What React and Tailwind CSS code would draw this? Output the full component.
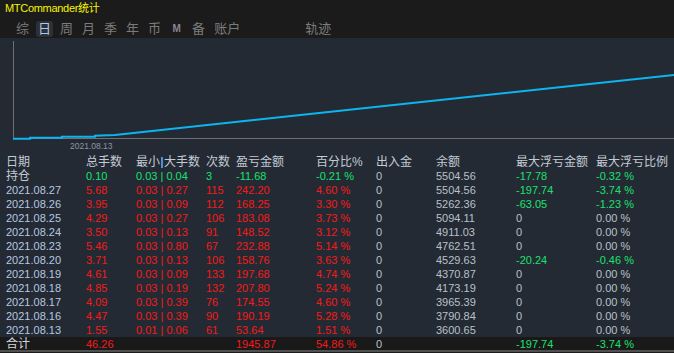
import React from 'react'

const GRID = 'grid grid-cols-[80px_50px_70px_30px_80px_60px_60px_80px_80px_1fr] pl-[6px]'

const RED = 'text-[#f41a1a]'
const GREEN = 'text-[#19e06f]'
const GRAY = 'text-[#b9c0ca]'

// [date, total, min, max, count, pnl, pct, io, balance, maxDd, maxDdPct]
const ROWS = [
  ['2021.08.27', '5.68', '0.03', '0.27', '115', '242.20', '4.60 %', '0', '5504.56', '-197.74', '-3.74 %'],
  ['2021.08.26', '3.95', '0.03', '0.09', '112', '168.25', '3.30 %', '0', '5262.36', '-63.05', '-1.23 %'],
  ['2021.08.25', '4.29', '0.03', '0.27', '106', '183.08', '3.73 %', '0', '5094.11', '0', '0.00 %'],
  ['2021.08.24', '3.50', '0.03', '0.13', '91', '148.52', '3.12 %', '0', '4911.03', '0', '0.00 %'],
  ['2021.08.23', '5.46', '0.03', '0.80', '67', '232.88', '5.14 %', '0', '4762.51', '0', '0.00 %'],
  ['2021.08.20', '3.71', '0.03', '0.13', '106', '158.76', '3.63 %', '0', '4529.63', '-20.24', '-0.46 %'],
  ['2021.08.19', '4.61', '0.03', '0.09', '133', '197.68', '4.74 %', '0', '4370.87', '0', '0.00 %'],
  ['2021.08.18', '4.85', '0.03', '0.19', '132', '207.80', '5.24 %', '0', '4173.19', '0', '0.00 %'],
  ['2021.08.17', '4.09', '0.03', '0.39', '76', '174.55', '4.60 %', '0', '3965.39', '0', '0.00 %'],
  ['2021.08.16', '4.47', '0.03', '0.39', '90', '190.19', '5.28 %', '0', '3790.84', '0', '0.00 %'],
  ['2021.08.13', '1.55', '0.01', '0.06', '61', '53.64', '1.51 %', '0', '3600.65', '0', '0.00 %'],
]

const TABS = ['综', '日', '周', '月', '季', '年', '币', 'M', '备', '账户']

function Tabs() {
  return (
    <div className="flex h-[19px] items-center pl-[14px] text-[13px] text-[#7b7b7b]">
      {TABS.map((t, i) => (
        <span
          key={t}
          className={`mr-[5px] flex h-[16px] items-center justify-center rounded-[3px] px-[2px] leading-none ${
            i === 1 ? 'bg-[#2a313b] text-[#b3c7e2]' : ''
          } ${t === 'M' ? 'w-[17px] text-[10px] font-bold text-[#8a8592]' : ''}`}
        >
          {t}
        </span>
      ))}
      <span className="ml-[56px] px-[2px] leading-none">轨迹</span>
    </div>
  )
}

function Chart() {
  return (
    <div className="h-[117px]">
      <svg width="674" height="117" className="block">
        <line x1="13.5" y1="3" x2="13.5" y2="101" stroke="#707070" strokeWidth="1" />
        <line x1="13" y1="100.5" x2="674" y2="100.5" stroke="#707070" strokeWidth="1" />
        <polyline
          points="13,100.7 30,100.7 30,99.7 62,99.7 62,98.8 95,98.8 95,97.8 115,97 674,37"
          fill="none"
          stroke="#0db5ef"
          strokeWidth="2"
        />
        <text x="70" y="110.5" fontSize="8.5" fill="#8c97a5" fontFamily="Liberation Sans, sans-serif">
          2021.08.13
        </text>
      </svg>
    </div>
  )
}

function Row({ r }) {
  const ddColor = r[9] === '0' ? GRAY : GREEN
  return (
    <div className={`${GRID} h-[14px] leading-[14px] text-[11px]`}>
      <span className="text-[#b5c8e0]">{r[0]}</span>
      <span className={RED}>{r[1]}</span>
      <span className={RED}>{r[2]} | {r[3]}</span>
      <span className={RED}>{r[4]}</span>
      <span className={RED}>{r[5]}</span>
      <span className={RED}>{r[6]}</span>
      <span className={GRAY}>{r[7]}</span>
      <span className={GRAY}>{r[8]}</span>
      <span className={ddColor}>{r[9]}</span>
      <span className={ddColor}>{r[10]}</span>
    </div>
  )
}

export default function App() {
  return (
    <div className="h-[353px] w-[674px] overflow-hidden bg-[#1b1b1b] font-['Liberation_Sans','Noto_Sans_CJK_SC',sans-serif]">
      <div className="h-[19px] pl-[5px] text-[11px] leading-[17px] tracking-[-0.3px] text-[#f5f500]">
        MTCommander统计
      </div>
      <Tabs />

      <div className="bg-[#242a33]">
        <Chart />

        {/* header */}
        <div className={`${GRID} h-[15px] text-[12px] leading-[15px] text-[#c3cbd6]`}>
          <span>日期</span>
          <span>总手数</span>
          <span className="flex items-center">
            最小<span className="mx-[1px] inline-block h-[11px] w-[2px] bg-[#4f8fd6]" />大手数
          </span>
          <span>次数</span>
          <span>盈亏金额</span>
          <span>百分比%</span>
          <span>出入金</span>
          <span>余额</span>
          <span>最大浮亏金额</span>
          <span>最大浮亏比例</span>
        </div>

        {/* open positions */}
        <div className={`${GRID} h-[13px] leading-[13px] text-[11px]`}>
          <span className="text-[12px] text-[#c3cbd6]">持仓</span>
          <span className={GREEN}>0.10</span>
          <span className={GREEN}>0.03 | 0.04</span>
          <span className={GREEN}>3</span>
          <span className={GREEN}>-11.68</span>
          <span className={GREEN}>-0.21 %</span>
          <span className={GRAY}>0</span>
          <span className={GRAY}>5504.56</span>
          <span className={GREEN}>-17.78</span>
          <span className={GREEN}>-0.32 %</span>
        </div>

        {ROWS.map(r => <Row key={r[0]} r={r} />)}
      </div>

      {/* totals */}
      <div className={`${GRID} h-[13px] bg-[#191919] pt-[2px] text-[11px] leading-[11px]`}>
        <span className="text-[12px] text-[#d2d6dc]">合计</span>
        <span className={RED}>46.26</span>
        <span />
        <span />
        <span className={RED}>1945.87</span>
        <span className={RED}>54.86 %</span>
        <span className={GRAY}>0</span>
        <span />
        <span className={GREEN}>-197.74</span>
        <span className={GREEN}>-3.74 %</span>
      </div>
      <div className="h-[2px] bg-[#505050]" />
    </div>
  )
}
